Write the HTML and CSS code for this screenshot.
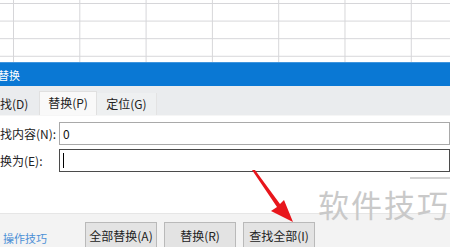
FILE: index.html
```html
<!DOCTYPE html>
<html>
<head>
  <meta charset="UTF-8">
  <title>替换</title>
  <link rel="stylesheet" href="styles.css">
</head>
<body>

  <div class="sheet"></div>

  <div class="dialog">
    <div class="title-bar">替换</div>

    <div class="tabs">
      <div class="tab">查找(D)</div>
      <div class="tab active">替换(P)</div>
      <div class="tab">定位(G)</div>
    </div>

    <div class="form">
      <div class="row">
        <label class="row-label">查找内容(N):</label>
        <div class="field">0</div>
      </div>
      <div class="row">
        <label class="row-label">替换为(E):</label>
        <div class="field focused"><span class="caret"></span></div>
      </div>
    </div>

    <div class="footer">
      <a class="tips" href="#">操作技巧</a>
      <div class="button-group">
        <button>全部替换(A)</button>
        <button>替换(R)</button>
        <button>查找全部(I)</button>
      </div>
    </div>
  </div>

  <!-- annotation overlay -->
  <svg class="arrow" width="60" height="60" viewBox="0 0 60 60">
    <path d="M2 0 L5 0 L30 34 L34 30 L43 52 L21 41 L27 37 Z" fill="#e8161c"/>
  </svg>

  <div class="watermark">
    <span class="watermark-bar"></span>
    <span class="watermark-text">软件技巧</span>
  </div>

</body>
</html>
```

FILE: styles.css
```css
* {
  margin: 0;
  padding: 0;
  box-sizing: border-box;
}

body {
  font-family: "Noto Sans CJK SC", "Noto Sans", sans-serif;
  font-size: 12px;
  color: #1a1a1a;
  background: #ffffff;
  width: 450px;
  height: 247px;
  overflow: hidden;
  position: relative;
}

.sheet {
  height: 62px;
  background-color: #ffffff;
  background-image:
    linear-gradient(to right, #d6d6d9 1px, transparent 1px),
    linear-gradient(to bottom, #d6d6d9 1px, transparent 1px);
  background-size: 66.3px 100%, 100% 17.6px;
  background-position: 13px 0, 0 3px;
}

.dialog {
  margin-left: -12px;
  width: 462px;
}

.title-bar {
  height: 24px;
  background: #0a78d4;
  color: #ffffff;
  font-size: 11px;
  line-height: 24px;
  padding-left: 10px;
  border-top: 1px solid #3f95de;
}

.tabs {
  height: 30px;
  background: #eaecee;
  display: flex;
  align-items: flex-end;
  border-bottom: 1px solid #f6f6f6;
}

.tab {
  height: 22px;
  line-height: 21px;
  width: 60px;
  text-align: center;
  white-space: nowrap;
  color: #222;
}

.tab:first-child {
  width: 51px;
  text-align: left;
}

.tab.active {
  height: 24px;
  width: 58px;
  line-height: 22px;
  background: #f9f9f9;
  border: 1px solid #e0e0e0;
  border-bottom: none;
}

.tab:last-child {
  background: #eef0f1;
  border-right: 1px solid #e3e3e3;
}

.form {
  height: 97px;
  background: #ffffff;
  padding-top: 6px;
  display: flex;
  flex-direction: column;
  gap: 4px;
}

.row {
  display: flex;
  align-items: center;
}

.row-label {
  width: 71px;
  white-space: nowrap;
  color: #222;
}

.field {
  flex: 1;
  height: 23px;
  border: 1px solid #a9a9a9;
  padding-left: 3px;
  line-height: 21px;
  color: #111;
}

.field.focused {
  border-color: #4b4b4b;
  display: flex;
  align-items: center;
}

.caret {
  display: block;
  width: 1px;
  height: 15px;
  background: #000;
}

.footer {
  height: 40px;
  background: #f3f3f3;
  border-top: 1px solid #e6e6e6;
  display: flex;
  align-items: flex-start;
  padding-top: 8px;
  padding-left: 15px;
}

.tips {
  width: 82px;
  font-size: 11px;
  color: #4b8fd6;
  text-decoration: none;
  margin-top: 8px;
}

.button-group {
  display: flex;
  gap: 7px;
}

button {
  font-family: inherit;
  font-size: 12px;
  width: 72px;
  height: 28px;
  background: #e3e3e3;
  border: 1px solid #b9b9b9;
  color: #222;
  padding-bottom: 2px;
  white-space: nowrap;
}

.arrow {
  position: absolute;
  left: 250px;
  top: 170px;
}

.watermark {
  position: absolute;
  left: 318px;
  top: 177px;
  width: 140px;
}

.watermark-bar {
  display: block;
  margin-left: 92px;
  width: 45px;
  height: 2px;
  background: #d2d2d2;
}

.watermark-text {
  display: block;
  margin-top: 8px;
  font-size: 31px;
  line-height: 34px;
  letter-spacing: 2px;
  white-space: nowrap;
  color: #c9c9c9;
}
```
